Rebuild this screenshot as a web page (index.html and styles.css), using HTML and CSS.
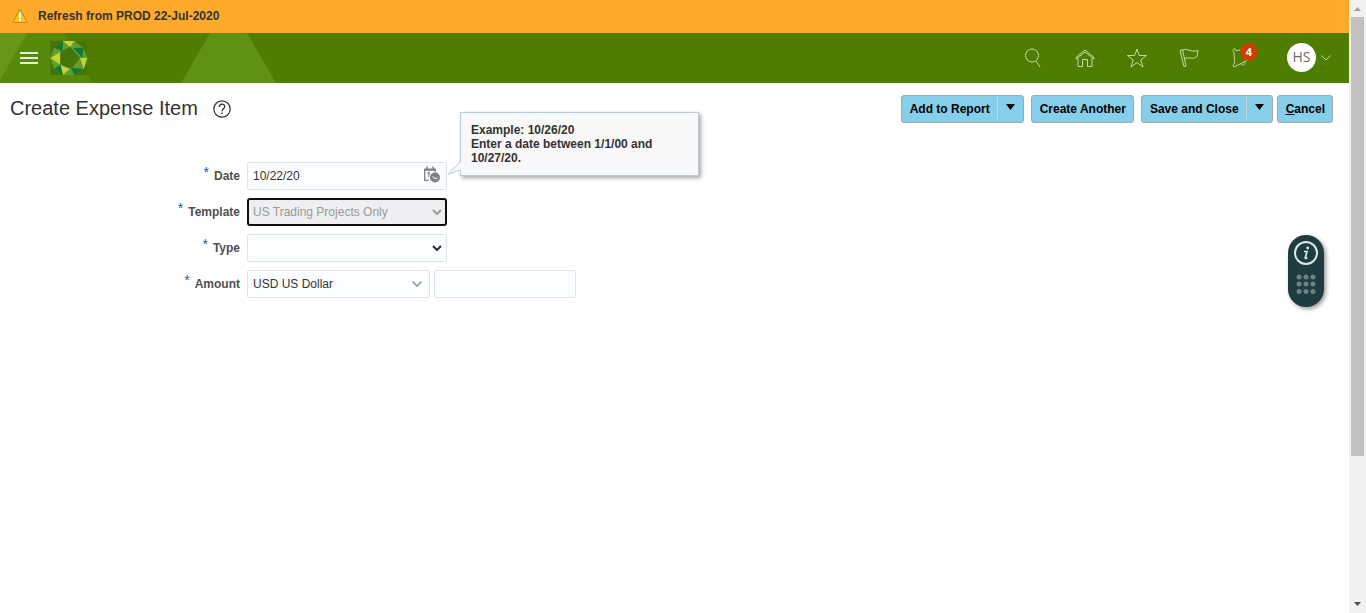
FILE: index.html
```html
<!DOCTYPE html>
<html lang="en">
<head>
<meta charset="utf-8">
<title>Create Expense Item</title>
<link rel="stylesheet" href="styles.css">
</head>
<body>
<div class="page">
  <div class="notice">
    <svg class="notice-icon" width="16" height="16" viewBox="0 0 16 16"><path d="M8 1 15.300 14.500H.7Z" fill="#f6c21c" stroke="#c08a1c" stroke-linejoin="round"/><path d="M8 4.500v5.500M8 11v2" stroke="#fff" stroke-width="2"/></svg>
    <span>Refresh from PROD 22-Jul-2020</span>
  </div>
  <header class="topbar">
    <svg class="topbar-art" width="280" height="50" viewBox="0 0 280 50"><path d="M0 0H64L92 50H0Z" fill="#57890a"/><path d="M0 0H27L0 47Z" fill="#669719"/><path d="M210 0H247L276 50H181Z" fill="#5f9113"/></svg>
    <button class="icon-button" aria-label="Navigator"><svg width="18" height="14" viewBox="0 0 18 14"><path d="M0 2h18M0 7h18M0 12h18" stroke="#e6eedb" stroke-width="2"/></svg></button>
    <a class="logo" href="#" aria-label="Home page"><svg width="38" height="36" viewBox="149 120 114 108">
      <path d="M150 123h109v102H150Z" fill="#477406"/>
      <path d="M188 123h34l27 20 12 31-11 33-28 18h-34l-27-18-11-33 11-31Z" fill="#5f9e35"/>
      <path d="M187 123h35l-12 18Z" fill="#bfd630"/>
      <path d="M161 143l27-20-2 30Z" fill="#17762f"/>
      <path d="M218 144l31-1-3 31Z" fill="#17762f"/>
      <path d="M239 174h22l-11 33Z" fill="#bfd630"/>
      <path d="M222 225l-10-21 38 3Z" fill="#17762f"/>
      <path d="M180 194l28 13-20 18Z" fill="#bfd630"/>
      <path d="M161 207l19-13 8 31Z" fill="#17762f"/>
      <path d="M180 156l-30 18 30 20Z" fill="#bfd630"/>
      <path d="M180 156l29-16 30 34-25 32-34-12Z" fill="#467509"/>
    </svg></a>
    <nav class="tools" aria-label="Global">
      <a href="#" aria-label="Search"><svg class="line-icon" viewBox="0 0 20 20"><circle cx="9" cy="7.500" r="6.500"/><path d="M13 13l4 6"/></svg></a>
      <a href="#" aria-label="Home"><svg class="line-icon" viewBox="0 0 20 20"><path d="M1 9.500 10 2l9 7.500v1.500L10 4 1 11ZM3 10v8.500h4.500v-7h5v7H17V10"/></svg></a>
      <a href="#" aria-label="Favorites"><svg class="line-icon" viewBox="0 0 20 20"><path d="M10 1l2.300 6.500h7.200L13.700 12l2.300 7-6-4.500L4 19l2.300-7L.5 7.500h7.200Z"/></svg></a>
      <a href="#" aria-label="Watchlist"><svg class="line-icon" viewBox="0 0 20 20"><path d="M1 2.500l2.500-1L7 18l-2 .6ZM3.500 2.500C8-1 11 5 19 2.500L18 8.500C13 12.500 10 8 5.200 11"/></svg></a>
      <a class="bell" href="#" aria-label="Notifications"><svg class="line-icon" viewBox="0 0 20 20"><path d="M3 4c-2-1-1-3.500 1-3 1 0 1 1 1 2C9 1 13 3 14 7c.5 3 1 4 3 5L3 19c-1.500-.5-1-2 0-3 1.500-3 0-6 0-12ZM10 16c2 2 4 1 4-1.500"/></svg><span class="badge">4</span></a>
    </nav>
    <button class="user" aria-label="Settings and Actions"><span class="avatar">HS</span><svg width="10" height="6" viewBox="0 0 10 6"><path d="M.5.5 5 5 9.500.5" fill="none" stroke="#c6d8aa"/></svg></button>
  </header>

  <main>
    <div class="heading">
      <h1>Create Expense Item</h1>
      <button class="icon-button" aria-label="Help"><svg width="18" height="18" viewBox="0 0 18 18" fill="none" stroke="#333"><circle cx="9" cy="9" r="8.200" stroke-width="1.200"/><path d="M6.300 7C6.300 3.300 11.900 3.400 11.700 6.700 11.500 8.700 9 8.700 9 11.200M9 12.500v1.500" stroke-width="1.300"/></svg></button>
      <div class="actions">
        <div class="split"><button class="btn">Add to Report</button><button class="btn arrow" aria-label="More report actions"><svg width="9" height="6" viewBox="0 0 9 6"><path d="M0 0h9L4.500 6Z"/></svg></button></div>
        <button class="btn">Create Another</button>
        <div class="split"><button class="btn">Save and Close</button><button class="btn arrow" aria-label="More save actions"><svg width="9" height="6" viewBox="0 0 9 6"><path d="M0 0h9L4.500 6Z"/></svg></button></div>
        <button class="btn cancel"><u>C</u>ancel</button>
      </div>
    </div>

    <form class="fields">
      <label for="date"><span class="required">*</span>Date</label>
      <div class="control">
        <input id="date" type="text" value="10/22/20">
        <button class="calendar" type="button" aria-label="Select Date"><svg width="18" height="18" viewBox="0 0 18 18"><path d="M1.700 3.500v10.800h4M1.700 4h10.500v3" fill="none" stroke="#7b8187" stroke-width="1.300"/><path d="M1 2.500h12v1.700H1Z" fill="#7b8187"/><path d="M4 .5v3M10 .5v3" stroke="#7b8187" stroke-width="1.500"/><path d="M4.500 7.500 6 6.500V11" fill="none" stroke="#7b8187" stroke-width="1.300"/><circle cx="12" cy="11.500" r="5.700" fill="#fcfdfe"/><circle cx="12" cy="11.500" r="5" fill="#7b8187"/><path d="M9.500 10.500l2.500 2 2.500-.5" fill="none" stroke="#fff"/></svg></button>
        <div class="hint" role="tooltip">Example: 10/26/20<br>Enter a date between 1/1/00 and 10/27/20.<svg class="hint-tail" width="15" height="15" viewBox="0 0 15 15"><path d="M14.500.5 1 13l13.500-4Z" fill="#f8f8f8"/><path d="M13.500.5 1 13l12.500-4" fill="none" stroke="#bccbd8"/></svg></div>
      </div>

      <label for="template"><span class="required">*</span>Template</label>
      <div class="control chosen">
        <select id="template" disabled><option>US Trading Projects Only</option></select>
        <svg class="chevron" width="10" height="6" viewBox="0 0 10 6"><path d="M1 1l4 4 4-4" fill="none" stroke="#9b9b9d" stroke-width="2"/></svg>
      </div>

      <label for="type"><span class="required">*</span>Type</label>
      <div class="control">
        <select id="type"><option></option></select>
        <svg class="chevron" width="10" height="6" viewBox="0 0 10 6"><path d="M1 1l4 4 4-4" fill="none" stroke="#2b2b2b" stroke-width="2"/></svg>
      </div>

      <label for="currency"><span class="required">*</span>Amount</label>
      <div class="pair">
        <div class="control currency">
          <select id="currency"><option>USD US Dollar</option></select>
          <svg class="chevron" width="10" height="6" viewBox="0 0 10 6"><path d="M.5.5 5 5 9.500.5" fill="none" stroke="#85898d" stroke-width="1.300"/></svg>
        </div>
        <div class="control amount"><input type="text" aria-label="Amount value"></div>
      </div>
    </form>
  </main>

  <button class="guide" aria-label="Guided help">
    <svg width="24" height="24" viewBox="0 0 24 24"><circle cx="12" cy="12" r="11" fill="none" stroke="#dfe8e9" stroke-width="2"/><circle cx="13.700" cy="7" r="1.400" fill="#dfe8e9"/><path d="M10 10.500h3l-1.800 6.500q0 1 2-.5" fill="none" stroke="#dfe8e9" stroke-width="1.700"/></svg>
    <svg width="20" height="20" viewBox="0 0 20 20" fill="#6c8285"><circle cx="3" cy="3" r="2.500"/><circle cx="10" cy="3" r="2.500"/><circle cx="17" cy="3" r="2.500"/><circle cx="3" cy="10" r="2.500"/><circle cx="10" cy="10" r="2.500"/><circle cx="17" cy="10" r="2.500"/><circle cx="3" cy="17.500" r="2.500"/><circle cx="10" cy="17.500" r="2.500"/><circle cx="17" cy="17.500" r="2.500"/></svg>
  </button>
</div>
<div class="scrollbar" aria-hidden="true">
  <svg width="7" height="4" viewBox="0 0 7 4"><path d="M0 4h7L3.500 0Z" fill="#a0a0a0"/></svg>
  <div class="track"><div class="thumb"></div></div>
  <svg width="7" height="4" viewBox="0 0 7 4"><path d="M0 0h7L3.500 4Z" fill="#505050"/></svg>
</div>
</body>
</html>
```
FILE: styles.css
```css
* { box-sizing: border-box; }
body {
  margin: 0;
  display: flex;
  min-height: 100vh;
  background: #fff;
  color: #333;
  font-family: "Liberation Sans", Arial, sans-serif;
  font-size: 12px;
}
button, input, select { font: inherit; color: inherit; }
button { border: 0; padding: 0; background: none; cursor: pointer; }
svg { display: block; }
.page { flex: 1; min-width: 0; position: relative; }

.notice {
  display: flex;
  align-items: center;
  gap: 10px;
  height: 33px;
  padding: 0 12px 2px;
  background: #ffaa2b;
  font-weight: bold;
}

.topbar {
  position: relative;
  display: flex;
  align-items: center;
  height: 50px;
  padding: 0 18px 1px 20px;
  background: #4f7d00;
}
.topbar-art { position: absolute; left: 0; top: 0; }
.topbar .icon-button, .logo { position: relative; }
.logo { margin-left: 12px; }
.tools { display: flex; gap: 32px; margin-left: auto; }
.tools a { display: block; }
.line-icon {
  width: 20px;
  height: 20px;
  fill: none;
  stroke: #c5d8a9;
  stroke-width: 1;
}
.bell { position: relative; }
.badge {
  position: absolute;
  left: 9px;
  top: -5px;
  width: 18px;
  height: 18px;
  border-radius: 50%;
  background: #cc3f04;
  color: #fff;
  font: bold 11px/18px "Open Sans", sans-serif;
  text-align: center;
}
.user { display: flex; align-items: center; gap: 5px; margin-left: 36px; }
.avatar {
  width: 29px;
  height: 29px;
  border-radius: 50%;
  background: #fff;
  color: #6b6b6b;
  font: 14px/28px "Open Sans", sans-serif;
  text-align: center;
}

.heading {
  display: flex;
  align-items: center;
  padding: 12px 16px 0 10px;
}
h1 {
  margin: 0 15px 2px 0;
  font-size: 20px;
  line-height: 24px;
  font-weight: normal;
}
.actions { display: flex; gap: 7px; margin-left: auto; }
.btn {
  height: 28px;
  padding: 0 7px 0 8px;
  border: 1px solid #a5a8aa;
  border-radius: 3px;
  background: #87ceeb;
  color: #000;
  font-weight: bold;
}
.cancel { margin-left: -3px; }
.split {
  display: flex;
  border: 1px solid #a5a8aa;
  border-radius: 3px;
  background: #87ceeb;
}
.split .btn { height: 26px; border: 0; background: none; }
.split .arrow {
  height: 23px;
  padding: 0 8px 2px;
  border-left: 1px solid #c4d6de;
  border-radius: 0;
}

.fields {
  display: grid;
  grid-template-columns: 240px 1fr;
  column-gap: 7px;
  row-gap: 8px;
  margin-top: 39px;
}
.fields label {
  display: flex;
  justify-content: flex-end;
  gap: 5px;
  line-height: 28px;
  font-weight: bold;
  color: #4f4f4f;
}
.required { color: #0a66ad; line-height: 20px; font-weight: normal; font-size: 14px; }
.control { position: relative; width: 200px; height: 28px; }
.control input, .control select {
  width: 100%;
  height: 100%;
  margin: 0;
  padding: 0 5px;
  border: 1px solid #dfe4e7;
  border-radius: 2px;
  background: #fcfdfe;
  appearance: none;
  outline: 0;
}
.control.chosen select {
  padding: 0 4px;
  border: 2px solid #101010;
  border-radius: 3px;
  background: #efeff1;
  color: #999;
  opacity: 1;
}
.chevron { position: absolute; right: 5px; top: 11px; pointer-events: none; }
.currency .chevron { right: 8px; }
.calendar { position: absolute; right: 6px; top: 4px; }
.pair { display: flex; gap: 4px; }
.pair .currency { width: 183px; }
.pair .amount { width: 142px; }

.hint {
  position: absolute;
  left: 213px;
  bottom: 14px;
  width: 239px;
  padding: 10px;
  border: 1px solid #bccbd8;
  background: #f8f8f8;
  box-shadow: 2px 2px 4px rgba(0, 0, 0, .35);
  font-weight: bold;
  line-height: 14px;
}
.hint-tail { position: absolute; left: -14px; bottom: -1px; }

.guide {
  position: absolute;
  right: 25px;
  top: 235px;
  display: flex;
  flex-direction: column;
  align-items: center;
  gap: 9px;
  width: 36px;
  padding: 6px 0 13px;
  border-radius: 18px;
  background: #1f3c40;
  box-shadow: 2px 2px 4px rgba(0, 0, 0, .4);
}

.scrollbar {
  display: flex;
  flex-direction: column;
  align-items: center;
  width: 17px;
  padding: 7px 2px;
  background: #f1f1f1;
}
.track { flex: 1; align-self: stretch; padding: 6px 0; }
.thumb { height: 75%; min-height: 439px; background: #c1c1c1; }
```
